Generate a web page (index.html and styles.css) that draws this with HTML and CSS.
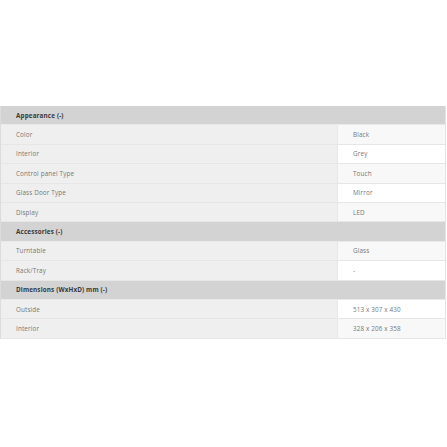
FILE: index.html
```html
<!DOCTYPE html>
<html>
<head>
<meta charset="utf-8">
<link rel="stylesheet" href="styles.css">
</head>
<body>
<div class="spec">
  <div class="group">Appearance (-)</div>
  <div class="row odd"><div class="label">Color</div><div class="value">Black</div></div>
  <div class="row"><div class="label">Interior</div><div class="value">Grey</div></div>
  <div class="row odd"><div class="label">Control panel Type</div><div class="value">Touch</div></div>
  <div class="row"><div class="label">Glass Door Type</div><div class="value">Mirror</div></div>
  <div class="row odd"><div class="label">Display</div><div class="value">LED</div></div>
  <div class="group">Accessories (-)</div>
  <div class="row odd"><div class="label">Turntable</div><div class="value">Glass</div></div>
  <div class="row"><div class="label">Rack/Tray</div><div class="value">-</div></div>
  <div class="group">Dimensions (WxHxD) mm (-)</div>
  <div class="row"><div class="label">Outside</div><div class="value">513 x 307 x 430</div></div>
  <div class="row odd"><div class="label">Interior</div><div class="value">328 x 206 x 358</div></div>
</div>
</body>
</html>
```
FILE: styles.css
```css
html, body {
  margin: 0;
  padding: 0;
  background: #ffffff;
}
body {
  font-family: "Open Sans", "Liberation Sans", sans-serif;
  font-size: 6.3px;
  letter-spacing: 0.15px;
}
.spec {
  margin-top: 106px;
  width: 446px;
  border-left: 1px solid #dcdcdc;
  border-right: 1px solid #e4e4e4;
  box-sizing: border-box;
}
.group {
  height: 19.4px;
  box-sizing: border-box;
  background: #d3d3d3;
  color: #3a3a3a;
  font-weight: 700;
  padding-left: 15px;
  display: flex;
  align-items: center;
  border-bottom: 1px solid #e9e9e9;
}
.row {
  display: flex;
  height: 19.4px;
  box-sizing: border-box;
  border-bottom: 1px solid #e6e6e6;
  color: #777777;
}
.label {
  width: 337px;
  flex: none;
  background: #efefef;
  padding-left: 15px;
  display: flex;
  align-items: center;
  border-right: 1px solid #e8e8e8;
  box-sizing: border-box;
}
.value {
  flex: 1;
  background: #ffffff;
  padding-left: 15px;
  display: flex;
  align-items: center;
}
.row.odd .value {
  background: #f8f8f8;
}
```
